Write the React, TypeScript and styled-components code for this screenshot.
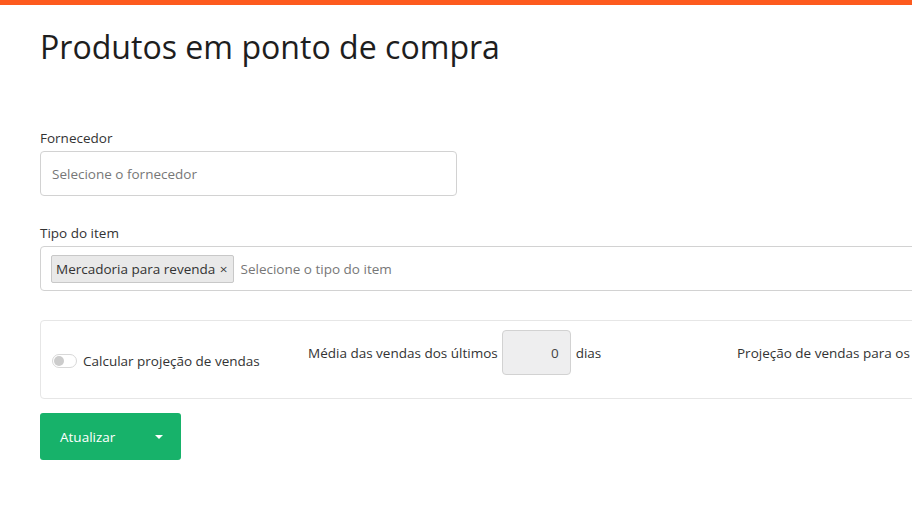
import React from "react";
import styled, { createGlobalStyle } from "styled-components";

const GlobalStyle = createGlobalStyle`
  html, body {
    margin: 0;
    padding: 0;
    background: #fff;
    overflow: hidden;
    font-family: "Open Sans", "Noto Sans", sans-serif;
    color: #333;
  }
`;

function App() {
  return (
    <>
      <GlobalStyle />
      <TopBar />
      <Page>
        <Title>Produtos em ponto de compra</Title>
        <Field>
          <Label>Fornecedor</Label>
          <Select width="417px">
            <Placeholder>Selecione o fornecedor</Placeholder>
          </Select>
        </Field>
        <Field>
          <Label>Tipo do item</Label>
          <Select width="1100px" compact>
            <Tag>
              Mercadoria para revenda <TagClose>×</TagClose>
            </Tag>
            <Placeholder>Selecione o tipo do item</Placeholder>
          </Select>
        </Field>
        <Panel>
          <ToggleLabel>
            <Switch />
            Calcular projeção de vendas
          </ToggleLabel>
          <InlineGroup>
            Média das vendas dos últimos
            <NumberBox>0</NumberBox>
            dias
          </InlineGroup>
          <InlineGroup>Projeção de vendas para os</InlineGroup>
        </Panel>
        <SplitButton>
          <span>Atualizar</span>
          <Caret />
        </SplitButton>
      </Page>
    </>
  );
}

export default App;

const TopBar = styled.div`
  height: 5px;
  background: #fd5a1e;
`;

const Page = styled.div`
  padding: 0 0 0 40px;
  width: 1200px;
`;

const Title = styled.h1`
  margin: 24px 0 0;
  font-size: 32.1px;
  font-weight: 400;
  line-height: 36px;
  color: #1e1e1e;
`;

const Field = styled.div`
  margin-top: 63px;
  & + & {
    margin-top: 27px;
  }
`;

const Label = styled.div`
  font-size: 13.5px;
  line-height: 20px;
  color: #333;
  margin-bottom: 3px;
`;

const Select = styled.div<{ width: string; compact?: boolean }>`
  box-sizing: border-box;
  width: ${({ width }) => width};
  height: 45px;
  border: 1px solid #d2d2d2;
  border-radius: 4px;
  display: flex;
  align-items: center;
  padding: 0 ${({ compact }) => (compact ? "10px" : "11px")};
  gap: 7px;
`;

const Placeholder = styled.span`
  font-size: 13.5px;
  color: #777;
`;

const Tag = styled.span`
  box-sizing: border-box;
  height: 28px;
  display: inline-flex;
  align-items: center;
  padding: 0 5px 0 4px;
  background: #e9e9e9;
  border: 1px solid #c8c8c8;
  border-radius: 2px;
  font-size: 13.5px;
  color: #333;
  white-space: pre;
`;

const TagClose = styled.span`
  margin-left: 1px;
`;

const Panel = styled.div`
  box-sizing: border-box;
  margin-top: 29px;
  width: 1100px;
  height: 79px;
  border: 1px solid #e6e6e6;
  border-radius: 4px;
  display: flex;
  align-items: flex-start;
  padding: 9px 11px 0;
  font-size: 13.5px;
  color: #333;
`;

const ToggleLabel = styled.label`
  display: flex;
  align-items: center;
  gap: 6px;
  margin-top: 21px;
  height: 20px;
  width: 256px;
`;

const Switch = styled.span`
  box-sizing: border-box;
  width: 25px;
  height: 14px;
  border: 1px solid #d8d8d8;
  border-radius: 7px;
  background: #fff;
  position: relative;
  &::after {
    content: "";
    position: absolute;
    left: 1px;
    top: 1px;
    width: 10px;
    height: 10px;
    border-radius: 50%;
    background: #cccccc;
  }
`;

const InlineGroup = styled.div`
  display: flex;
  align-items: center;
  gap: 4px;
  width: 429px;
  height: 45px;
  flex-shrink: 0;
  &:last-child {
    width: auto;
  }
`;

const NumberBox = styled.div`
  box-sizing: border-box;
  width: 69px;
  height: 45px;
  background: #eeeeef;
  border: 1px solid #d2d2d2;
  border-radius: 4px;
  display: flex;
  align-items: center;
  justify-content: flex-end;
  padding-right: 11px;
  color: #444;
  margin-right: 1px;
`;

const SplitButton = styled.button`
  margin-top: 14px;
  box-sizing: border-box;
  width: 141px;
  height: 47px;
  border: none;
  border-radius: 3px;
  background: #17b26a;
  color: #fff;
  font-family: "Open Sans", sans-serif;
  font-size: 13.5px;
  display: flex;
  align-items: center;
  justify-content: space-between;
  padding: 0 18px 0 20px;
`;

const Caret = styled.span`
  width: 0;
  height: 0;
  border-left: 4px solid transparent;
  border-right: 4px solid transparent;
  border-top: 4px solid #fff;
`;
